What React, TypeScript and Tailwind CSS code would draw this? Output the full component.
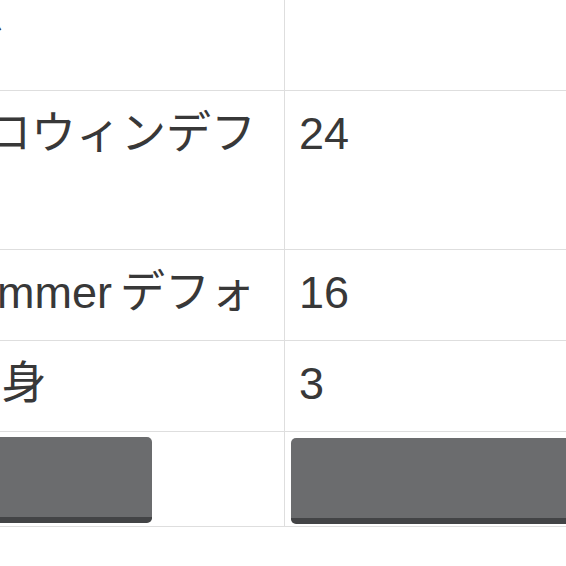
import React from "react";

const cellL =
  "border-r border-[#dedede] pl-[14px] pr-[8px] pt-[9px] pb-[13px] whitespace-nowrap";
const cellR = "pl-[14px] pt-[9px] pb-[13px] whitespace-nowrap";
const row = "grid grid-cols-[360px_1fr] border-b border-[#dedede]";

export default function App() {
  return (
    <div className="w-[566px] h-[566px] overflow-hidden bg-white">
      <div className="-ml-[75px] w-[700px] text-[45px] leading-[68px] text-[#383838] font-['Liberation_Sans','Noto_Sans_CJK_JP',sans-serif]">
        <div className={row}>
          <div className={cellL}>
            {"\u00a0\u00a0"}
            <span className="-ml-[2px]">ド</span>
          </div>
          <div className={cellR}>{"\u00a0"}</div>
        </div>
        <div className={row}>
          <div className={cellL}>
            <div className="pl-[2px]">ハロウィンデフ</div>
            <div>{"\u00a0"}</div>
          </div>
          <div className={cellR}>24</div>
        </div>
        <div className={row}>
          <div className={cellL}>
            <span className="pl-[3px]">Summer</span>
            <span className="pl-[8px]">デフォ</span>
          </div>
          <div className={cellR}>16</div>
        </div>
        <div className={row}>
          <div className={cellL}>
            {"\u00a0"}
            <span className="pl-[5px]">半身</span>
          </div>
          <div className={cellR}>3</div>
        </div>
        <div className={row}>
          <div className="border-r border-[#dedede] pl-[6px] pt-[5px] pb-[3px]">
            <div className="w-[221px] h-[86px] rounded-[5px] bg-[#6b6c6e] border-b-[6px] border-[#434446]" />
          </div>
          <div className="pl-[6px] pt-[6px] pb-[2px]">
            <div className="w-[320px] h-[86px] rounded-[5px] bg-[#6b6c6e] border-b-[6px] border-[#434446]" />
          </div>
        </div>
      </div>
    </div>
  );
}
